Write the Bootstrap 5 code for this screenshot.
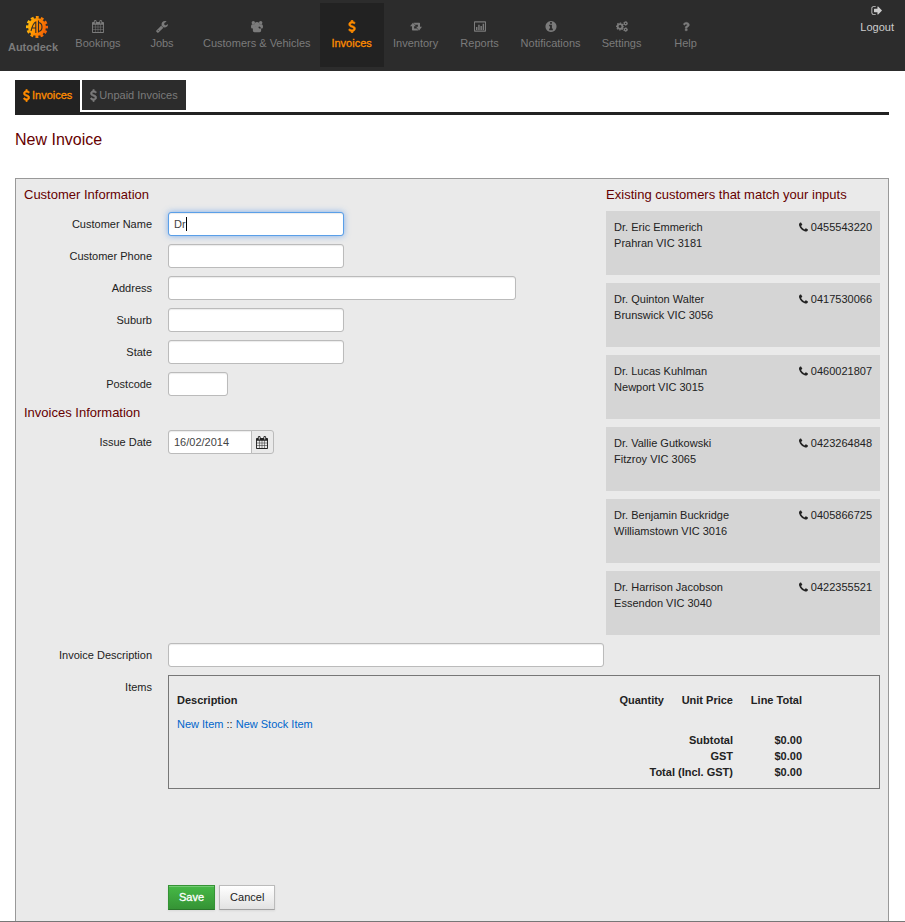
<!DOCTYPE html>
<html lang="en">
<head>
<meta charset="utf-8">
<meta name="viewport" content="width=device-width, initial-scale=1">
<title>Autodeck - New Invoice</title>
<link href="https://cdn.jsdelivr.net/npm/bootstrap@5.3.0/dist/css/bootstrap.min.css" rel="stylesheet">
<style>
  body { font: 11px/16px "Liberation Sans", Arial, sans-serif; color: #222; background: #fff; }
  a { text-decoration: none; }
  .ico { width: 12px; height: 13px; fill: currentColor; flex: none; }
  .topbar { background: #2c2c2c; height: 71px; padding: 3px 3px 4px 0; }
  .topbar a { color: #7b7b7b; }
  .brand { width: 66px; padding-top: 12px; font-weight: bold; }
  .brand svg { width: 24px; height: 24px; margin-left: 8px; }
  .menu-item { min-width: 64px; height: 64px; padding: 17px 9px 0; gap: 2px; }
  .topbar .menu-item.active { background: #222; color: #ff8c00; -webkit-text-stroke: .3px #ff8c00; }
  .topbar .logout { color: #ccc; padding: 1px 8px 0; gap: 2px; }
  .page-body { padding: 9px 16px 0 15px; }
  .tabs { border-bottom: 3px solid #222; gap: 2px; }
  .tabs a { height: 30px; padding: 0 8px; gap: 2px; margin-bottom: 2px; background: #2c2c2c; color: #7b7b7b; }
  .tabs a.active { height: 32px; margin-bottom: 0; padding-bottom: 2px; background: #222; color: #ff8c00; -webkit-text-stroke: .3px #ff8c00; }
  .tabs .ico { width: 7px; }
  h1, h2 { color: #600; font-weight: 400; margin: 0; }
  h1 { font-size: 16px; line-height: 24px; margin: 13px 0 26px; }
  h2 { font-size: 13px; line-height: 16px; }
  .panel { background: #eaeaea; border: 1px solid #999; border-bottom: 0; padding: 8px 8px 11px; }
  .stack { display: grid; gap: 8px; }
  .fields { margin: 9px 0; }
  .field { display: flex; align-items: center; gap: 16px; }
  .field > label, .field > .lbl { flex: 0 0 128px; text-align: right; }
  .form-control { font-size: 11px; line-height: 16px; height: 24px; padding: 3px 5px; color: #444; border: 1px solid #bbb; border-radius: 3px; box-shadow: inset 0 1px 1px rgba(0,0,0,.08); }
  .form-control:focus, .form-control.is-current { border-color: #5a9fe8; box-shadow: inset 0 1px 1px rgba(0,0,0,.08), 0 0 6px rgba(82,150,236,.7); }
  .w-m { width: 176px; } .w-l { width: 348px; } .w-xs { width: 60px; } .w-xl { width: 436px; }
  .date-group { width: 106px; }
  .date-group .btn { padding: 0 5px 0 4px; border: 1px solid #bbb; border-radius: 0 3px 3px 0; background: #eaeaea; color: #222; display: flex; align-items: center; }
  .caret { position: absolute; left: 18px; top: 5px; width: 1px; height: 14px; background: #000; }
  .matches { flex: 0 0 32%; }
  .match { background: #d5d5d5; min-height: 64px; padding: 8px; }
  .match .ico { width: 9px; height: 16px; vertical-align: top; }
  .items { border: 1px solid #777; padding: 16px 8px 8px; }
  .items table { width: 100%; }
  .items th, .items td { padding: 0; white-space: nowrap; }
  .items thead th { padding-bottom: 8px; }
  .items a { color: #06c; }
  .c-num { width: 69px; }
  .actions { margin-top: 96px; padding-left: 144px; }
  .actions .btn { font-size: 11px; line-height: 16px; height: 25px; padding: 3px 10px 4px; border-radius: 0; box-shadow: inset 0 1px 0 rgba(255,255,255,.25), 0 1px 2px rgba(0,0,0,.08); }
  .btn-save { background: linear-gradient(#46b946, #359335); border: 1px solid #359335; border-bottom-color: #2a762a; color: #fff; -webkit-text-stroke: .3px #fff; }
  .btn-plain { background: linear-gradient(#fff, #e2e2e2); border: 1px solid #bbb; border-bottom-color: #a2a2a2; color: #222; }
  .foot { border-top: 1px solid #777; }
</style>
</head>
<body>
<svg class="d-none" aria-hidden="true">
  <symbol id="i-cal" viewBox="64 0 1664 1792"><path d="M192 1664h288v-288h-288v288zm352 0h320v-288h-320v288zm-352-352h288v-320h-288v320zm352 0h320v-320h-320v320zm-352-384h288v-288h-288v288zm736 736h320v-288h-320v288zm-384-736h320v-288h-320v288zm768 736h288v-288h-288v288zm-384-352h320v-320h-320v320zm-352-864v-288q0-13-9.5-22.5t-22.5-9.5h-64q-13 0-22.500 9.500t-9.500 22.500v288q0 13 9.500 22.500t22.500 9.500h64q13 0 22.500-9.500t9.500-22.500zm736 864h288v-320h-288v320zm-384-384h320v-288h-320v288zm384 0h288v-288h-288v288zm32-480v-288q0-13-9.500-22.500t-22.500-9.500h-64q-13 0-22.500 9.500t-9.500 22.500v288q0 13 9.500 22.500t22.500 9.500h64q13 0 22.500-9.500t9.500-22.500zm384-64v1280q0 52-38 90t-90 38h-1408q-52 0-90-38t-38-90v-1280q0-52 38-90t90-38h128v-96q0-66 47-113t113-47h64q66 0 113 47t47 113v96h384v-96q0-66 47-113t113-47h64q66 0 113 47t47 113v96h128q52 0 90 38t38 90z"/></symbol>
  <symbol id="i-wrench" viewBox="64 64 1664 1664"><path d="M448 1472q0-26-19-45t-45-19-45 19-19 45 19 45 45 19 45-19 19-45zm644-420l-682 682q-37 37-90 37-52 0-91-37l-106-108q-38-36-38-90 0-53 38-91l681-681q39 98 114.500 173.500t173.500 114.500zm634-435q0 39-23 106-47 134-164.500 217.500t-258.500 83.500q-185 0-316.500-131.500t-131.500-316.500 131.500-316.500 316.500-131.500q58 0 121.500 16.500t107.500 46.500q16 11 16 28t-16 28l-293 169v224l193 107q5-3 79-48.500t135.500-81 70.500-35.500q15 0 23.500 10t8.500 25z"/></symbol>
  <symbol id="i-group" viewBox="0 0 14 14"><circle cx="2.700" cy="2.600" r="2"/><circle cx="11.300" cy="2.600" r="2"/><circle cx="7" cy="4.800" r="3"/><path d="M0 7.200Q0 4.400 1.400 4.300h3.200L5.500 7.600 4.500 9.400H1.400Q0 9.400 0 7.200zM14 7.200q0-2.800-1.400-2.900H9.400L8.500 7.600l1 1.800h3.100q1.400 0 1.400-2.200zM2.100 11.400Q2.100 7 4.600 6.900h4.800q2.500.1 2.500 4.500 0 2.400-1.900 2.400H4q-1.900 0-1.900-2.400z"/></symbol>
  <symbol id="i-usd" viewBox="384 0 1024 1792"><path stroke="currentColor" stroke-width="90" d="M1362 1185q0 153-99.500 263.500t-258.500 136.500v175q0 14-9 23t-23 9h-135q-13 0-22.500-9.500t-9.500-22.500v-175q-66-9-127.500-31t-101.500-44.500-74-48-46.500-37.500-17.500-18q-17-21-2-41l103-135q7-10 23-12 15-2 24 9l2 2q113 99 243 125 37 8 74 8 81 0 142.500-43t61.500-122q0-28-15-53t-33.500-42-58.500-37.500-66-32-80-32.500q-39-16-61.500-25t-61.500-26.500-62.500-31-56.500-35.500-53.500-42.500-43.500-49-35.500-58-21-66.500-8.500-78q0-138 98-242t255-134v-180q0-13 9.500-22.500t22.500-9.500h135q14 0 23 9t9 23v176q57 6 110.500 23t87 33.500 63.500 37.500 39 29 15 14q17 18 5 38l-81 146q-8 15-23 16-14 3-27-7-3-3-14.500-12t-39-26.500-58.500-32-74.500-26-85.500-11.500q-95 0-155 43t-60 111q0 26 8.500 48t29.500 41.500 39.500 33 56 31 60.500 27 70 27.500q53 20 81 31.500t76 35 75.500 42.500 62 50 53 63.500 31.500 76.500 13 94z"/></symbol>
  <symbol id="i-retweet" viewBox="0 0 14 14"><path d="M3.400 2.500 6.900 6.800H4.800V9.300h3.300l1.900 2.400H3.200q-.9 0-.9-.9V6.800H0zM10.600 11.700 7.100 7.400h2.100V4.900H5.900L4 2.500h6.800q.9 0 .9.900v4H14z"/></symbol>
  <symbol id="i-chart" viewBox="0 0 14 14"><path fill-rule="evenodd" d="M.8 1h12.400q.8 0 .8.800v10.400q0 .8-.8.800H.8q-.8 0-.8-.8V1.800Q0 1 .8 1zM1.200 2.200v9.600h11.600V2.200z"/><path d="M2.300 7.500h1.700v3.500H2.300zM4.900 5h1.700v6H4.900zM7.500 6.300h1.700V11H7.500zM10.100 3.800h1.700V11h-1.700z"/></symbol>
  <symbol id="i-info" viewBox="64 64 1664 1664"><path d="M1152 1376v-160q0-14-9-23t-23-9h-96v-512q0-14-9-23t-23-9h-320q-14 0-23 9t-9 23v160q0 14 9 23t23 9h96v320h-96q-14 0-23 9t-9 23v160q0 14 9 23t23 9h448q14 0 23-9t9-23zm-128-896v-160q0-14-9-23t-23-9h-192q-14 0-23 9t-9 23v160q0 14 9 23t23 9h192q14 0 23-9t9-23zm640 416q0 209-103 385.500t-279.500 279.500-385.500 103-385.500-103-279.500-279.500-103-385.500 103-385.500 279.500-279.500 385.500-103 385.500 103 279.500 279.500 103 385.500z"/></symbol>
  <symbol id="i-cogs" viewBox="0 0 14 14"><g fill="none" stroke="currentColor"><circle cx="4.700" cy="7" r="2.800" stroke-width="2.200"/><circle cx="4.700" cy="7" r="4" stroke-width="1.600" stroke-dasharray="1.570 1.571" stroke-dashoffset=".785"/><circle cx="11.200" cy="3.400" r="1.500" stroke-width="1.400"/><circle cx="11.200" cy="3.400" r="2.300" stroke-width="1" stroke-dasharray="1.200 1.209"/><circle cx="11.200" cy="10.600" r="1.500" stroke-width="1.400"/><circle cx="11.200" cy="10.600" r="2.300" stroke-width="1" stroke-dasharray="1.200 1.209"/></g></symbol>
  <symbol id="i-help" viewBox="0 0 1792 1792"><path stroke="currentColor" stroke-width="50" d="M1088 1256v240q0 16-12 28t-28 12h-240q-16 0-28-12t-12-28v-240q0-16 12-28t28-12h240q16 0 28 12t12 28zm316-600q0 54-15.500 101t-35 76.500-55 59.500-57.500 43.500-61 35.500q-41 23-68.500 65t-27.500 67q0 17-12 32.500t-28 15.500h-240q-15 0-25.500-18.500t-10.500-37.500v-45q0-83 65-156.500t143-108.500q59-27 84-56t25-76q0-42-46.500-74t-107.500-32q-65 0-108 29-35 25-107 115-13 16-31 16-12 0-25-8l-164-125q-13-10-15.500-25t5.500-28q160-266 464-266 80 0 161 31t146 83 106 127.500 41 158.500z"/></symbol>
  <symbol id="i-out" viewBox="0 0 1792 1792"><path d="M704 1440q0 4 1 20t.5 26.500-3 23.500-10 19.500-20.500 6.500h-320q-119 0-203.500-84.500t-84.500-203.500v-704q0-119 84.500-203.500t203.500-84.500h320q13 0 22.500 9.500t9.500 22.500q0 4 1 20t.5 26.500-3 23.500-10 19.500-20.500 6.500h-320q-66 0-113 47t-47 113v704q0 66 47 113t113 47h312l11.500 1 11.500 3 8 5.500 7 9 2 13.500zm928-544q0 26-19 45l-544 544q-19 19-45 19t-45-19-19-45v-288h-448q-26 0-45-19t-19-45v-384q0-26 19-45t45-19h448v-288q0-26 19-45t45-19 45 19l544 544q19 19 19 45z"/></symbol>
  <symbol id="i-phone" viewBox="192 128 1408 1408"><path d="M1600 1240q0 27-10 70.500t-21 68.500q-21 50-122 106-94 51-186 51-27 0-52.500-3.500t-57.500-12.500-47.500-14.500-55.500-20.500-49-18q-98-35-175-83-128-79-264.500-215.500t-215.500-264.500q-48-77-83-175-3-9-18-49t-20.500-55.500-14.500-47.500-12.500-57.500-3.500-52.500q0-92 51-186 56-101 106-122 25-11 68.500-21t70.500-10q14 0 21 3 18 6 53 76 11 19 30 54t35 63.500 31 53.500q3 4 17.500 25t21.500 35.500 7 28.500q0 20-28.500 50t-62 55-62 53-28.500 46q0 9 5 22.500t8.500 20.500 14 24 11.500 19q76 137 174 235t235 174q2 1 19 11.500t24 14 20.500 8.500 22.500 5q18 0 46-28.500t53-62 55-62 50-28.500q14 0 28.500 7t35.500 21.500 25 17.500q25 15 53.500 31t63.500 35 54 30q70 35 76 53 3 7 3 21z"/></symbol>
</svg>

<header class="topbar d-flex justify-content-between align-items-start">
  <nav class="d-flex" aria-label="Main">
    <a href="#" class="brand d-flex flex-column align-items-center">
      <svg viewBox="0 0 24 24" aria-hidden="true">
        <defs><linearGradient id="lg" gradientUnits="userSpaceOnUse" x1="1" y1="8" x2="23" y2="14"><stop offset="0" stop-color="#ffc20e"/><stop offset=".5" stop-color="#ff8a00"/><stop offset="1" stop-color="#f25c05"/></linearGradient></defs>
        <circle cx="12" cy="12" r="9" fill="url(#lg)"/>
        <circle cx="12" cy="12" r="9.700" fill="none" stroke="url(#lg)" stroke-width="2.600" stroke-dasharray="2.900 2.179" stroke-dashoffset="1.450"/>
        <path d="M6 16Q8 8 10.800 7V18M7 13H10.800M13.500 5.500V17.500M13.500 7.500Q17 8 17 12T13.500 16.500" fill="none" stroke="#2c2c2c" stroke-width="1.100"/>
      </svg>
      <span>Autodeck</span>
    </a>
    <a href="#" class="menu-item d-flex flex-column align-items-center"><svg class="ico"><use href="#i-cal"/></svg>Bookings</a>
    <a href="#" class="menu-item d-flex flex-column align-items-center"><svg class="ico"><use href="#i-wrench"/></svg>Jobs</a>
    <a href="#" class="menu-item d-flex flex-column align-items-center"><svg class="ico"><use href="#i-group"/></svg>Customers &amp; Vehicles</a>
    <a href="#" class="menu-item active d-flex flex-column align-items-center" aria-current="page"><svg class="ico"><use href="#i-usd"/></svg>Invoices</a>
    <a href="#" class="menu-item d-flex flex-column align-items-center"><svg class="ico"><use href="#i-retweet"/></svg>Inventory</a>
    <a href="#" class="menu-item d-flex flex-column align-items-center"><svg class="ico"><use href="#i-chart"/></svg>Reports</a>
    <a href="#" class="menu-item d-flex flex-column align-items-center"><svg class="ico"><use href="#i-info"/></svg>Notifications</a>
    <a href="#" class="menu-item d-flex flex-column align-items-center"><svg class="ico"><use href="#i-cogs"/></svg>Settings</a>
    <a href="#" class="menu-item d-flex flex-column align-items-center"><svg class="ico"><use href="#i-help"/></svg>Help</a>
  </nav>
  <a href="#" class="logout d-flex flex-column align-items-center"><svg class="ico"><use href="#i-out"/></svg>Logout</a>
</header>

<main class="page-body">
  <nav class="tabs d-flex align-items-end" aria-label="Invoices">
    <a href="#" class="active d-flex align-items-center" aria-current="page"><svg class="ico"><use href="#i-usd"/></svg>Invoices</a>
    <a href="#" class="d-flex align-items-center"><svg class="ico"><use href="#i-usd"/></svg>Unpaid Invoices</a>
  </nav>
  <h1>New Invoice</h1>

  <form class="panel">
    <div class="d-flex">
      <section class="flex-grow-1">
        <h2>Customer Information</h2>
        <div class="stack fields">
          <div class="field"><label for="name">Customer Name</label>
            <div class="position-relative w-m"><input id="name" class="form-control is-current" type="text" value="Dr"><span class="caret"></span></div></div>
          <div class="field"><label for="phone">Customer Phone</label><input id="phone" class="form-control w-m" type="text"></div>
          <div class="field"><label for="address">Address</label><input id="address" class="form-control w-l" type="text"></div>
          <div class="field"><label for="suburb">Suburb</label><input id="suburb" class="form-control w-m" type="text"></div>
          <div class="field"><label for="state">State</label><input id="state" class="form-control w-m" type="text"></div>
          <div class="field"><label for="postcode">Postcode</label><input id="postcode" class="form-control w-xs" type="text"></div>
        </div>
        <h2>Invoices Information</h2>
        <div class="stack fields">
          <div class="field"><label for="issued">Issue Date</label>
            <div class="input-group date-group flex-nowrap"><input id="issued" class="form-control" type="text" value="16/02/2014"><button class="btn" type="button" aria-label="Choose date"><svg class="ico"><use href="#i-cal"/></svg></button></div></div>
        </div>
      </section>
      <section class="matches stack">
        <h2>Existing customers that match your inputs</h2>
        <div class="match d-flex justify-content-between"><div>Dr. Eric Emmerich<br>Prahran VIC 3181</div><div><svg class="ico"><use href="#i-phone"/></svg> 0455543220</div></div>
        <div class="match d-flex justify-content-between"><div>Dr. Quinton Walter<br>Brunswick VIC 3056</div><div><svg class="ico"><use href="#i-phone"/></svg> 0417530066</div></div>
        <div class="match d-flex justify-content-between"><div>Dr. Lucas Kuhlman<br>Newport VIC 3015</div><div><svg class="ico"><use href="#i-phone"/></svg> 0460021807</div></div>
        <div class="match d-flex justify-content-between"><div>Dr. Vallie Gutkowski<br>Fitzroy VIC 3065</div><div><svg class="ico"><use href="#i-phone"/></svg> 0423264848</div></div>
        <div class="match d-flex justify-content-between"><div>Dr. Benjamin Buckridge<br>Williamstown VIC 3016</div><div><svg class="ico"><use href="#i-phone"/></svg> 0405866725</div></div>
        <div class="match d-flex justify-content-between"><div>Dr. Harrison Jacobson<br>Essendon VIC 3040</div><div><svg class="ico"><use href="#i-phone"/></svg> 0422355521</div></div>
      </section>
    </div>

    <div class="stack mt-2">
      <div class="field"><label for="desc">Invoice Description</label><input id="desc" class="form-control w-xl" type="text"></div>
      <div class="field align-items-start">
        <div class="lbl pt-1">Items</div>
        <div class="items flex-grow-1">
          <table>
            <thead><tr><th>Description</th><th class="c-num text-end">Quantity</th><th class="c-num text-end">Unit Price</th><th class="c-num text-end">Line Total</th><th class="c-num"></th></tr></thead>
            <tbody>
              <tr><td colspan="5"><a href="#">New Item</a> :: <a href="#">New Stock Item</a></td></tr>
              <tr><th colspan="3" class="text-end">Subtotal</th><th class="text-end">$0.00</th><td></td></tr>
              <tr><th colspan="3" class="text-end">GST</th><th class="text-end">$0.00</th><td></td></tr>
              <tr><th colspan="3" class="text-end">Total (Incl. GST)</th><th class="text-end">$0.00</th><td></td></tr>
            </tbody>
          </table>
        </div>
      </div>
    </div>
    <div class="actions d-flex gap-1">
      <button class="btn btn-save" type="submit">Save</button>
      <button class="btn btn-plain" type="button">Cancel</button>
    </div>
  </form>
</main>
<footer class="foot"></footer>
<script src="https://cdn.jsdelivr.net/npm/bootstrap@5.3.0/dist/js/bootstrap.bundle.min.js"></script>
</body>
</html>
